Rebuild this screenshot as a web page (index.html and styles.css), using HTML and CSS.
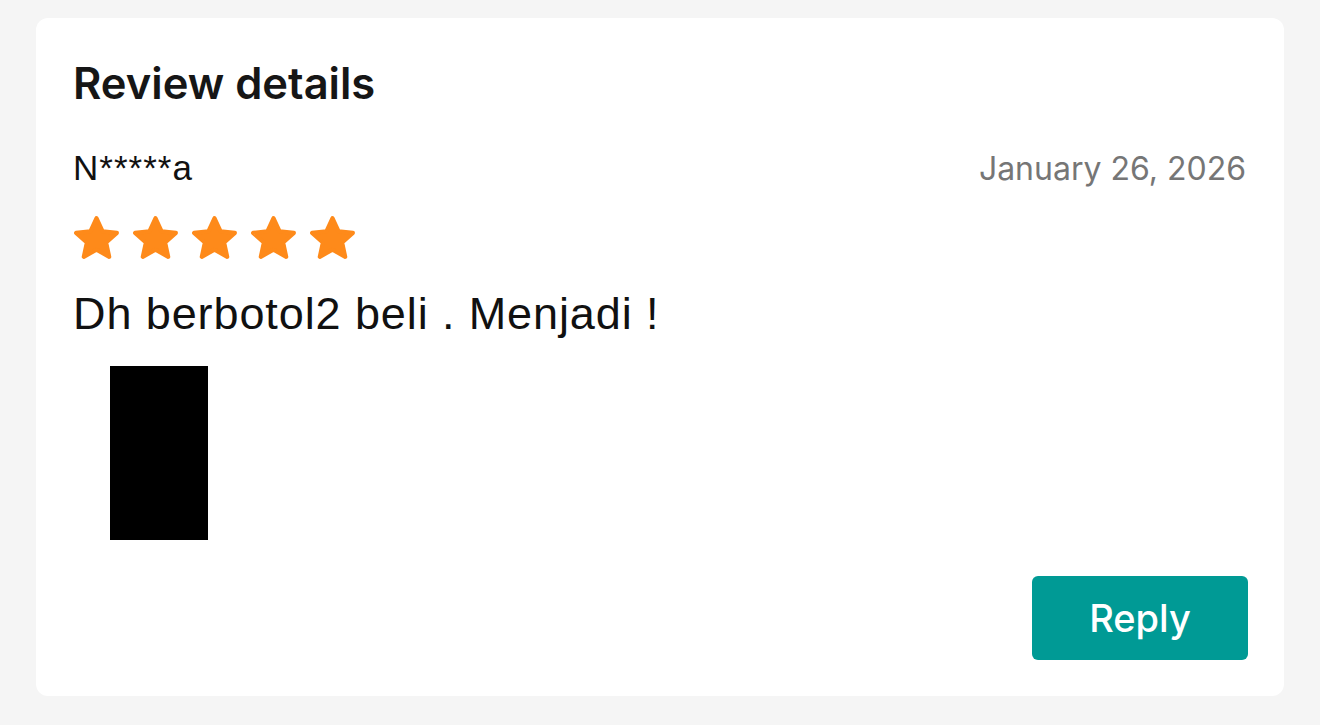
FILE: index.html
```html
<!DOCTYPE html>
<html lang="en">
<head>
    <meta charset="UTF-8">
    <meta name="viewport" content="width=device-width, initial-scale=1.0">
    <title>Review details</title>
    <link rel="stylesheet" href="styles.css">
</head>
<body>
    <div class="card">
        <h1 class="title">Review details</h1>

        <div class="meta">
            <span class="user">N*****a</span>
            <span class="date">January 26, 2026</span>
        </div>

        <!-- Rating -->
        <div class="stars">
            <svg class="star" viewBox="0 0 48 48"><polygon points="24,4 30,17 44,18.5 33.5,28 36.5,42 24,35 11.5,42 14.5,28 4,18.5 18,17"/></svg>
            <svg class="star" viewBox="0 0 48 48"><polygon points="24,4 30,17 44,18.5 33.5,28 36.5,42 24,35 11.5,42 14.5,28 4,18.5 18,17"/></svg>
            <svg class="star" viewBox="0 0 48 48"><polygon points="24,4 30,17 44,18.5 33.5,28 36.5,42 24,35 11.5,42 14.5,28 4,18.5 18,17"/></svg>
            <svg class="star" viewBox="0 0 48 48"><polygon points="24,4 30,17 44,18.5 33.5,28 36.5,42 24,35 11.5,42 14.5,28 4,18.5 18,17"/></svg>
            <svg class="star" viewBox="0 0 48 48"><polygon points="24,4 30,17 44,18.5 33.5,28 36.5,42 24,35 11.5,42 14.5,28 4,18.5 18,17"/></svg>
        </div>

        <p class="comment">Dh berbotol2 beli . Menjadi !</p>

        <div class="photo"></div>

        <div class="actions">
            <button class="reply">Reply</button>
        </div>
    </div>
</body>
</html>
```

FILE: styles.css
```css
body {
    margin: 0;
    background-color: #f5f5f5;
    font-family: Inter, "Liberation Sans", sans-serif;
    color: #161823;
}
.card {
    margin: 18px 36px;
    padding: 40px 36px 36px 37px;
    background-color: #ffffff;
    border-radius: 12px;
}
.title {
    margin: 0;
    font-size: 43.5px;
    line-height: 50px;
    font-weight: 600;
    color: #161616;
}
.meta {
    margin-top: 40px;
    display: flex;
    justify-content: space-between;
    align-items: baseline;
}
.user {
    font-family: "Liberation Sans", Arial, sans-serif;
    font-size: 35px;
    line-height: 40px;
    letter-spacing: 1px;
    color: #111111;
}
.date {
    font-size: 32px;
    line-height: 40px;
    color: #767676;
    margin-right: 2px;
}
.stars {
    margin-top: 25px;
    display: flex;
    gap: 11px;
}
.star {
    width: 49px;
    height: 49px;
    margin-left: -1px;
}
.star polygon {
    fill: #fe8a1a;
    stroke: #fe8a1a;
    stroke-width: 4;
    stroke-linejoin: round;
}
.comment {
    margin: 26px 0 0;
    font-family: "Liberation Sans", Arial, sans-serif;
    font-size: 45px;
    line-height: 50px;
    letter-spacing: 0.9px;
    color: #111111;
}
.photo {
    margin: 27px 0 0 37px;
    width: 98px;
    height: 174px;
    background-color: #000000;
}
.actions {
    margin-top: 36px;
    display: flex;
    justify-content: flex-end;
}
.reply {
    width: 216px;
    height: 84px;
    border: none;
    border-radius: 6px;
    background-color: #009a95;
    color: #ffffff;
    font-family: Inter, sans-serif;
    font-size: 38px;
    font-weight: 500;
    cursor: pointer;
}
```
